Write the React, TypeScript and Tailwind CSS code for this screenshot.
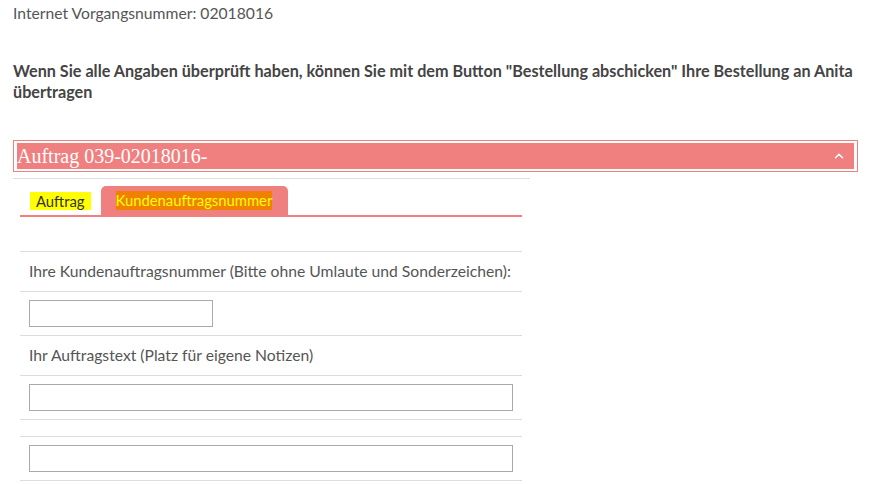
import { ChevronUp } from 'lucide-react';

export default function App() {
  return (
    <div className="min-h-[484px] bg-white font-['Lato',sans-serif] text-[15.7px] text-[#555]">
      <div className="px-[13px] pt-[3px]">
        <p className="leading-[20px]">Internet Vorgangsnummer: 02018016</p>
        <p className="mt-[37px] text-[16.2px] font-bold leading-[21px] text-[#444]">
          Wenn Sie alle Angaben überprüft haben, können Sie mit dem Button "Bestellung abschicken" Ihre Bestellung an Anita
          übertragen
        </p>

        <div className="mt-[38px] w-[845px] border border-[#f08080] px-[3px] py-[2px]">
          <div className="flex h-[26px] items-center justify-between bg-[#f08080] pr-[8px] text-white">
            <span className="font-['Liberation_Serif',serif] text-[20px] leading-none">Auftrag 039-02018016-</span>
            <ChevronUp className="h-[14px] w-[14px]" strokeWidth={2.5} />
          </div>
        </div>

        <div className="mt-[6px] w-[517px] border-t border-[#ddd] pl-[7px]">
          <div className="w-[502px]">
            <div className="flex items-end border-b-2 border-[#f08080] pt-[7px]">
              <div className="flex h-[29px] items-center px-[10px]">
                <span className="bg-[#ffff00] px-[6px] text-[14.8px] leading-[18px] text-[#333]">Auftrag</span>
              </div>
              <div className="flex h-[29px] w-[187px] items-center rounded-t-[5px] bg-[#f08080] px-[15px]">
                <span className="bg-[#f08000] text-[14.8px] leading-[19px] text-[#ffff00]">Kundenauftragsnummer</span>
              </div>
            </div>

            <div className="mt-[34px] border-t border-[#ddd]">
              <div className="flex h-[40px] items-center border-b border-[#ddd] px-[9px]">
                Ihre Kundenauftragsnummer (Bitte ohne Umlaute und Sonderzeichen):
              </div>
              <div className="flex h-[44px] items-center border-b border-[#ddd] px-[9px]">
                <input className="h-[27px] w-[184px] border border-[#aaa]" />
              </div>
              <div className="flex h-[40px] items-center border-b border-[#ddd] px-[9px]">
                Ihr Auftragstext (Platz für eigene Notizen)
              </div>
              <div className="flex h-[44px] items-center border-b border-[#ddd] px-[9px]">
                <input className="h-[27px] w-[486px] border border-[#aaa]" />
              </div>
              <div className="h-[17px] border-b border-[#ddd]" />
              <div className="flex h-[44px] items-center border-b border-[#ddd] px-[9px]">
                <input className="h-[27px] w-[486px] border border-[#aaa]" />
              </div>
            </div>
          </div>
        </div>
      </div>
    </div>
  );
}
